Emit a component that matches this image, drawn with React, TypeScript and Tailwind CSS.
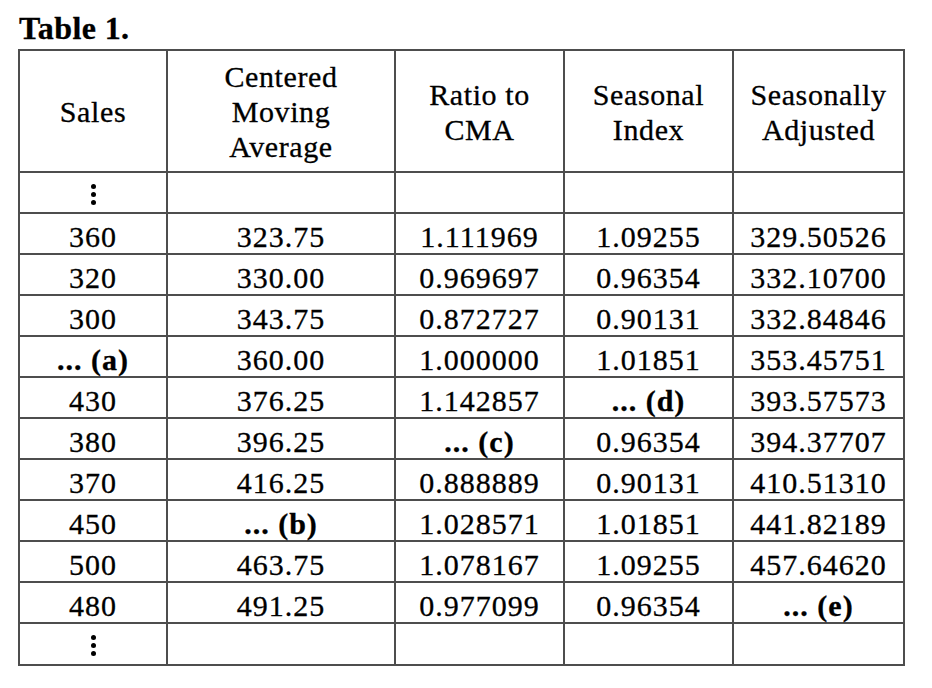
import React from "react";

type Cell = string;

const header = [
  ["Sales"],
  ["Centered", "Moving", "Average"],
  ["Ratio to", "CMA"],
  ["Seasonal", "Index"],
  ["Seasonally", "Adjusted"],
];

const rows: Cell[][] = [
  ["360", "323.75", "1.111969", "1.09255", "329.50526"],
  ["320", "330.00", "0.969697", "0.96354", "332.10700"],
  ["300", "343.75", "0.872727", "0.90131", "332.84846"],
  ["... (a)", "360.00", "1.000000", "1.01851", "353.45751"],
  ["430", "376.25", "1.142857", "... (d)", "393.57573"],
  ["380", "396.25", "... (c)", "0.96354", "394.37707"],
  ["370", "416.25", "0.888889", "0.90131", "410.51310"],
  ["450", "... (b)", "1.028571", "1.01851", "441.82189"],
  ["500", "463.75", "1.078167", "1.09255", "457.64620"],
  ["480", "491.25", "0.977099", "0.96354", "... (e)"],
];

function VDots() {
  return (
    <div className="flex flex-col items-center gap-[3px] pt-[11px]">
      <div className="w-[5px] h-[5px] rounded-full bg-black" />
      <div className="w-[5px] h-[5px] rounded-full bg-black" />
      <div className="w-[5px] h-[5px] rounded-full bg-black" />
    </div>
  );
}

function DotsRow() {
  return (
    <>
      <div className="border-r-2 border-b-2 border-[#4d4d4d]">
        <VDots />
      </div>
      <div className="border-r-2 border-b-2 border-[#4d4d4d]" />
      <div className="border-r-2 border-b-2 border-[#4d4d4d]" />
      <div className="border-r-2 border-b-2 border-[#4d4d4d]" />
      <div className="border-r-2 border-b-2 border-[#4d4d4d]" />
    </>
  );
}

export default function App() {
  return (
    <div className="w-[932px] h-[688px] bg-white text-black font-['Liberation_Serif','Times_New_Roman',serif] [-webkit-text-stroke:0.3px_black]">
      <div className="pl-[19px] pt-[13px] h-[49px] text-[32px] leading-[31px] font-bold tracking-[0.4px]">
        Table 1.
      </div>
      <div className="ml-[18px] w-max border-l-2 border-t-2 border-[#4d4d4d] grid grid-cols-[148px_228px_169px_169px_171px] grid-rows-[122px_41px_repeat(10,41px)_42px]">
        {header.map((lines, i) => (
          <div
            key={"h" + i}
            className="border-r-2 border-b-2 border-[#4d4d4d] flex flex-col items-center justify-center pt-[1px] text-[30px] leading-[35px] tracking-[0.6px]"
          >
            {lines.map((l) => (
              <div key={l}>{l}</div>
            ))}
          </div>
        ))}
        <DotsRow />
        {rows.map((r, ri) =>
          r.map((c, ci) => {
            const bold = c.startsWith("...");
            return (
              <div
                key={ri + "-" + ci}
                className={
                  "border-r-2 border-b-2 border-[#4d4d4d] text-center pt-[8px] text-[30px] leading-[30px] tracking-[1px] whitespace-nowrap " +
                  (bold ? "font-bold" : "")
                }
              >
                {c}
              </div>
            );
          })
        )}
        <DotsRow />
      </div>
    </div>
  );
}
